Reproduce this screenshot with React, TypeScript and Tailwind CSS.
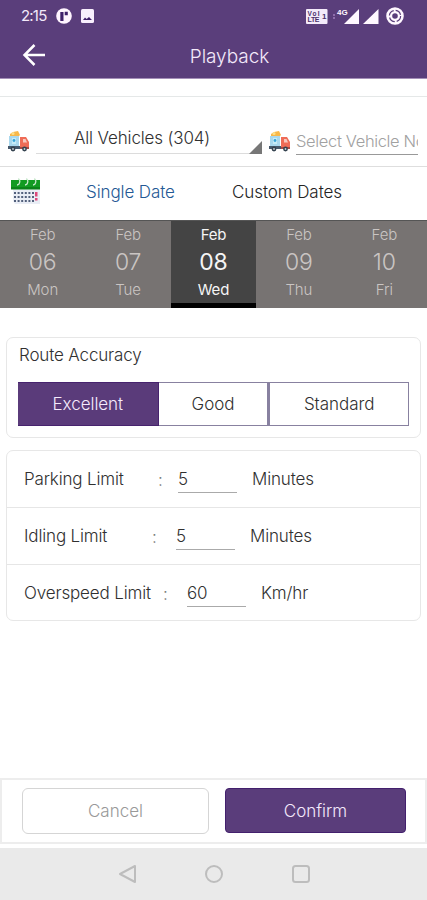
import { useState } from "react";
import clsx from "clsx";

const days = [
  { date: "06", day: "Mon" },
  { date: "07", day: "Tue" },
  { date: "08", day: "Wed" },
  { date: "09", day: "Thu" },
  { date: "10", day: "Fri" },
];

const accuracies = [
  { label: "Excellent", width: "w-[141px]" },
  { label: "Good", width: "w-[110px]" },
  { label: "Standard", width: "w-[141px]" },
];

const limits = [
  {
    label: "Parking Limit",
    value: "5",
    unit: "Minutes",
    labelWidth: "w-[134px]",
    colonWidth: "w-[20px]",
  },
  {
    label: "Idling Limit",
    value: "5",
    unit: "Minutes",
    labelWidth: "w-[128px]",
    colonWidth: "w-[24px]",
  },
  {
    label: "Overspeed Limit",
    value: "60",
    unit: "Km/hr",
    labelWidth: "w-[139px]",
    colonWidth: "w-[24px]",
  },
];

function TruckIcon() {
  return (
    <svg width="23" height="23" viewBox="0 0 23 23" className="shrink-0">
      <path d="M3 4 6 2l5-1 2 4-2 2H3z" fill="#f8b84a" />
      <circle cx="6" cy="3.5" r="1.5" fill="#fde08a" />
      <path d="M2 6h10v12H2z" fill="#a9d8ee" />
      <path d="M5 8h4v6H5z" fill="#c7ecf8" />
      <circle cx="7" cy="10.5" r="1.4" fill="#3aa5d8" />
      <path d="M13 7h6l3 5v6h-9z" fill="#ef6c57" />
      <path d="M16 9h2.500l1.500 3.500h-4z" fill="#f7c9bf" />
      <path d="M1 16h12v3H1z" fill="#46586b" />
      <path d="M13 17h9v2h-9z" fill="#a84842" />
      <circle cx="6" cy="19" r="2.400" fill="#34424f" />
      <circle cx="6" cy="19" r="0.900" fill="#c8d0d6" />
      <circle cx="17.500" cy="19" r="2.400" fill="#34424f" />
      <circle cx="17.500" cy="19" r="0.900" fill="#c8d0d6" />
    </svg>
  );
}

function CalendarIcon() {
  return (
    <svg width="32" height="27" viewBox="0 0 32 27" className="-mt-[4px] shrink-0">
      <path d="M3 11h27v15H5l-2-3z" fill="#e9edf5" />
      <path d="M1 2h29v9H1z" fill="#129b22" />
      <path d="M1 9h29v2.500H1z" fill="#0b8419" />
      <g fill="none" stroke="#c9e9cd" strokeWidth="1.300">
        <path d="M7 7c3 0 4-6 1-6" />
        <path d="M15 7c3 0 4-6 1-6" />
        <path d="M23 7c3 0 4-6 1-6" />
      </g>
      <g stroke="#52607c" strokeWidth="2" strokeDasharray="2 1.600">
        <path d="M4 15h20" />
        <path d="M4 19h20" />
        <path d="M4 23h20" />
      </g>
      <path d="M25 14h2.500v4.500H25zM25 20h2.500v2.500H25z" fill="#dc477b" />
    </svg>
  );
}

function StatusBar() {
  return (
    <div className="flex h-8 items-center pl-[21px] pr-[23px] text-[#f3e9fa]">
      <span className="w-[35px] text-[15px] font-normal tracking-[-0.8px]">2:15</span>
      <svg width="16" height="16" viewBox="0 0 16 16">
        <circle cx="8" cy="8" r="7.800" fill="#fff5ff" />
        <path d="M4.300 4h3.200v9H4.300zM8.700 3.800h3.100v3.400H8.700z" fill="#40206b" />
      </svg>
      <svg width="13" height="14" viewBox="0 0 13 14" className="ml-[9px]">
        <rect width="13" height="14" rx="1.500" fill="#f8effd" />
        <path d="m2 11 2-2.500 1.700 1.500L8 8l3 3z" fill="#40206b" />
      </svg>
      <svg width="22" height="15" viewBox="0 0 22 15" className="ml-auto">
        <rect width="21.500" height="15" rx="1" fill="#f3eafa" />
        <g fill="#49306a" fontFamily="Liberation Sans, sans-serif" fontWeight="700">
          <text x="1.500" y="6.800" fontSize="6.500" textLength="12">VoI</text>
          <text x="1.500" y="13.300" fontSize="7" textLength="12">LTE</text>
          <text x="16" y="10" fontSize="8">1</text>
        </g>
      </svg>
      <svg width="28" height="16" viewBox="0 0 28 16" className="ml-[4px]">
        <path d="M27 1v15H12z" fill="#fff8ff" />
        <path d="M2 6v5" stroke="#8d6dab" strokeWidth="2" strokeDasharray="2 1" />
        <text x="5" y="6.800" fontSize="8" fontWeight="700" fill="#fff8ff" fontFamily="Liberation Sans, sans-serif">4G</text>
      </svg>
      <svg width="16" height="16" viewBox="0 0 16 16" className="ml-[3px]">
        <path d="M15.500 1v15H0z" fill="#fff8ff" />
      </svg>
      <svg width="18" height="18" viewBox="0 0 18 18" className="ml-[7px]">
        <circle cx="9" cy="9" r="5.800" fill="none" stroke="#fff8ff" strokeWidth="6" />
        <circle cx="9" cy="9" r="5.600" fill="none" stroke="#5a3e7b" strokeWidth="1.200" strokeDasharray="6.800 2" />
      </svg>
    </div>
  );
}

function Header() {
  return (
    <header className="h-[79px] shrink-0 border-b border-[#a48fb8] bg-[#5a3e7b]">
      <StatusBar />
      <div className="grid h-[46px] grid-cols-[56px_1fr_24px] items-center">
        <button aria-label="Back" className="pl-[22px]">
          <svg width="24" height="24" viewBox="0 0 24 24" fill="none" stroke="#fff" strokeWidth="2.500">
            <path d="M12.500 2 2.500 12l10 10M2.500 12H23" />
          </svg>
        </button>
        <h1 className="pt-[4px] text-center text-[19px] font-light tracking-[-0.05px] text-[#f3e9fa]">
          Playback
        </h1>
      </div>
    </header>
  );
}

function App() {
  const [selectedDay, setSelectedDay] = useState("08");
  const [accuracy, setAccuracy] = useState("Excellent");

  return (
    <div className="flex h-[900px] w-[427px] flex-col overflow-hidden bg-white font-['Inter','Liberation_Sans',sans-serif] text-[17px] font-light text-[#303030]">
      <Header />
      <div className="h-[18px] shrink-0 border-b border-[#e5e8e8]" />

      {/* Vehicle selection */}
      <div className="flex h-[70px] shrink-0 items-start border-b border-[#dedede] pl-[7px] pt-[33px]">
        <TruckIcon />
        <div className="relative ml-[6px] h-[24px] w-[226px] border-b border-[#dcdcdc] pt-[1px]">
          <div className="-mt-[6px] pl-[38px] leading-[26px] tracking-[-0.15px] whitespace-nowrap">
            All Vehicles (304)
          </div>
          <svg width="13" height="13" viewBox="0 0 13 13" className="absolute right-0 bottom-[-1px]">
            <path d="M13 0v13H0z" fill="#777" />
          </svg>
        </div>
        <div className="ml-[6px]">
          <TruckIcon />
        </div>
        <div className="ml-[5px] h-[25px] w-[122px] overflow-hidden border-b-[1.500px] border-[#999] text-[16.500px] leading-[23px] tracking-[-0.35px] whitespace-nowrap text-[#a1a1a1]">
          Select Vehicle No
        </div>
      </div>

      {/* Date mode */}
      <div className="flex h-[53px] shrink-0 items-center pl-[10px]">
        <CalendarIcon />
        <button className="-mt-[2px] ml-[44px] w-[90px] text-left tracking-[-0.1px] whitespace-nowrap text-[#245994]">
          Single Date
        </button>
        <button className="-mt-[2px] ml-[56px] tracking-[-0.08px] text-[#242424]">Custom Dates</button>
      </div>

      <div className="grid h-[88px] shrink-0 grid-cols-5 border-t border-[#555] bg-[#777372]">
        {days.map(({ date, day }) => (
          <button
            key={date}
            onClick={() => setSelectedDay(date)}
            className={clsx(
              "flex h-[87px] flex-col items-center border-b-[5px] pt-[3px]",
              selectedDay === date
                ? "border-black bg-[#444] font-normal text-[#f5f5f5]"
                : "border-transparent text-[#cac5c3]"
            )}
          >
            <span className="h-[22px] text-[15px] leading-[22px] tracking-[-0.2px]">Feb</span>
            <span className="h-[32px] text-[23px] leading-[33px] tracking-[-0.2px]">{date}</span>
            <span className="h-[23px] text-[15px] leading-[24px] tracking-[-0.1px]">{day}</span>
          </button>
        ))}
      </div>

      {/* Route accuracy */}
      <section className="mx-[6px] mt-[29px] h-[101px] shrink-0 rounded-[7px] border-[1.500px] border-[#e7e7e7] px-[11px] pt-[5px]">
        <h2 className="pl-px leading-[24px] tracking-[-0.15px]">Route Accuracy</h2>
        <div className="mt-[15px] flex h-[44px]">
          {accuracies.map(({ label, width }) => (
            <button
              key={label}
              onClick={() => setAccuracy(label)}
              className={clsx(
                "border border-l-0 pt-[2px] tracking-[-0.05px] last:border-l-2",
                width,
                accuracy === label
                  ? "border-[#47236e] bg-[#5a3b7a] text-[#f5eafc]"
                  : "border-[#8881a0]"
              )}
            >
              {label}
            </button>
          ))}
        </div>
      </section>

      {/* Limits */}
      <section className="mx-[6px] mt-[12px] h-[171px] shrink-0 divide-y divide-[#e6e6e6] rounded-[7px] border-[1.500px] border-[#e7e7e7]">
        {limits.map(({ label, value, unit, labelWidth, colonWidth }) => (
          <div key={label} className="flex h-[57px] items-center pt-px pl-[17px] tracking-[-0.15px]">
            <span className={clsx("whitespace-nowrap", labelWidth)}>{label}</span>
            <span className={clsx("pt-[2px] text-[#777]", colonWidth)}>:</span>
            <span className="-mt-[2px] h-[28px] w-[59px] border-b-[1.500px] border-[#aaa] leading-[28px]">
              {value}
            </span>
            <span className="ml-[15px]">{unit}</span>
          </div>
        ))}
      </section>

      {/* Actions */}
      <footer className="mt-auto flex h-[66px] shrink-0 border-2 border-[#ededed] pt-[8px] pl-[20px]">
        <button className="h-[46px] w-[187px] rounded-[6px] border-[1.500px] border-[#d5d5d5] pt-[2px] text-[#999]">
          Cancel
        </button>
        <button className="ml-[16px] h-[45px] w-[181px] rounded-[4px] border border-[#43206d] bg-[#5a3d7b] pt-[2px] text-[#f4e9fb]">
          Confirm
        </button>
      </footer>

      <nav className="mt-[4px] flex h-[52px] shrink-0 items-center bg-[#eaeaea] pl-[118px]">
        <svg width="196" height="22" viewBox="0 0 196 22" fill="none" stroke="#bdbdbd" strokeWidth="2">
          <path d="M17 3v16L2 11z" strokeLinejoin="round" />
          <circle cx="96" cy="11" r="8" />
          <rect x="175" y="3" width="16" height="16" rx="2.500" />
        </svg>
      </nav>
    </div>
  );
}

export default App;
